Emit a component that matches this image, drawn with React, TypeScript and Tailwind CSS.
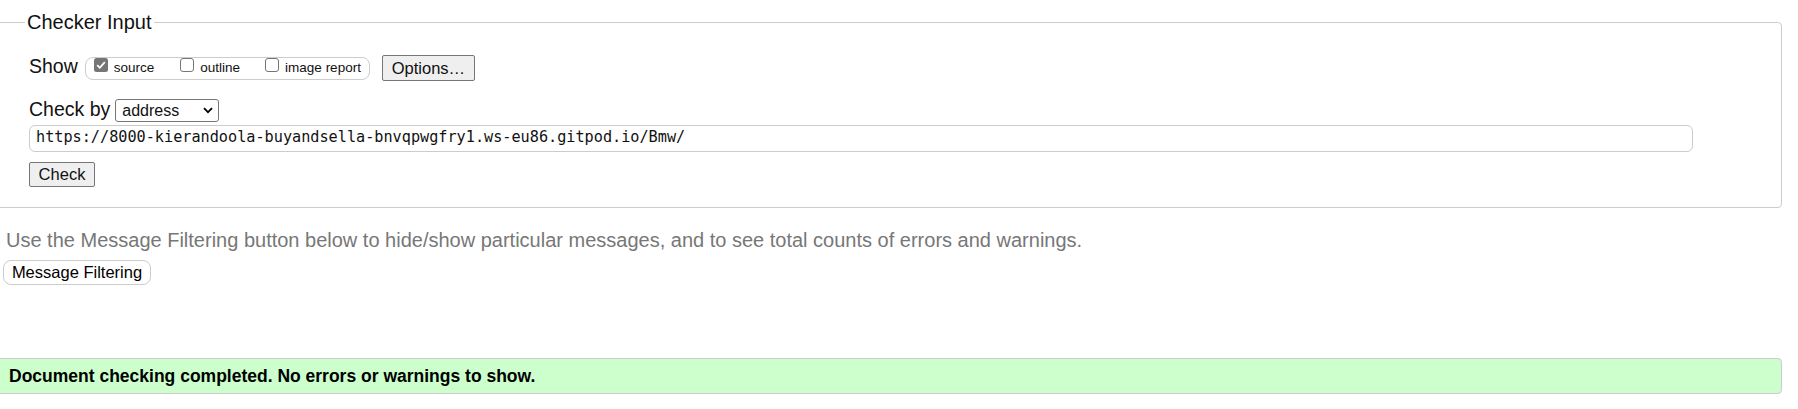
import React from "react";

const CHECK_URL =
  "https://8000-kierandoola-buyandsella-bnvqpwgfry1.ws-eu86.gitpod.io/Bmw/";

const Checkbox: React.FC<{ checked?: boolean }> = ({ checked }) => (
  <svg width="14" height="14" viewBox="0 0 14 14" className="shrink-0">
    {checked ? (
      <>
        <rect x="0" y="0" width="14" height="14" rx="2.5" fill="#767676" />
        <path
          d="M3.2 7.2 L5.8 9.8 L10.8 4.2"
          fill="none"
          stroke="#ffffff"
          strokeWidth="1.8"
        />
      </>
    ) : (
      <rect
        x="0.5"
        y="0.5"
        width="13"
        height="13"
        rx="2.5"
        fill="#ffffff"
        stroke="#767676"
      />
    )}
  </svg>
);

const App: React.FC = () => {
  return (
    <div className="min-h-[409px] bg-white text-[#111] font-['Liberation_Sans',Arial,sans-serif]">
      <fieldset className="mt-[11px] ml-[-10px] mr-[16px] rounded-[4px] border border-[#cccccc] pl-[38px] pb-[20px]">
        <legend className="ml-[-4px] px-[2px] text-[20px] leading-[23px]">
          Checker Input
        </legend>

        {/* Show row */}
        <div className="mt-[21px] flex h-[26px] items-start">
          <span className="text-[19.5px] leading-[22px]">Show</span>
          <div className="ml-[7px] mt-[2px] flex h-[23px] items-start rounded-[8px] border border-[#cccccc] px-[8px]">
            <Checkbox checked />
            <span className="ml-[6px] mt-[2px] text-[13.5px] leading-[16px]">
              source
            </span>
            <span className="ml-[26px]">
              <Checkbox />
            </span>
            <span className="ml-[6px] mt-[2px] text-[13.5px] leading-[16px]">
              outline
            </span>
            <span className="ml-[25px]">
              <Checkbox />
            </span>
            <span className="ml-[6px] mt-[2px] text-[13.5px] leading-[16px]">
              image report
            </span>
          </div>
          <div className="ml-[12px] flex h-[26px] w-[93px] items-center justify-center rounded-[2px] border border-[#767676] bg-[#efefef] text-[16.5px]">
            Options…
          </div>
        </div>

        {/* Check by row */}
        <div className="mt-[17px] flex items-start">
          <span className="text-[19.5px] leading-[22px]">Check by</span>
          <div className="ml-[5px] mt-[1px] flex h-[23px] w-[104px] items-center justify-between rounded-[3px] border border-[#767676] bg-white pl-[6px] pr-[5px]">
            <span className="text-[16px] leading-[18px]">address</span>
            <svg width="10" height="7" viewBox="0 0 10 7">
              <path
                d="M1 1.2 L5 5.2 L9 1.2"
                fill="none"
                stroke="#000"
                strokeWidth="1.8"
              />
            </svg>
          </div>
        </div>

        <div className="mt-[3px] flex h-[27px] w-[1664px] items-center rounded-[6px] border border-[#cccccc] pl-[6px] pb-[2px] font-['DejaVu_Sans_Mono',monospace] text-[15.2px]">
          {CHECK_URL}
        </div>

        <div className="mt-[10px] flex h-[25px] w-[66px] items-center justify-center rounded-[2px] border border-[#767676] bg-[#efefef] text-[16.5px]">
          Check
        </div>
      </fieldset>

      <p className="mt-[21px] ml-[6px] text-[20px] leading-[23px] text-[#777777]">
        Use the Message Filtering button below to hide/show particular messages,
        and to see total counts of errors and warnings.
      </p>

      <div className="mt-[8px] ml-[3px] flex h-[25px] w-[148px] items-center justify-center rounded-[8px] border border-[#cccccc] bg-white text-[16.5px] text-black">
        Message Filtering
      </div>

      <div className="mt-[73px] ml-[-10px] mr-[16px] flex h-[36px] items-center rounded-[4px] border border-[#cccccc] bg-[#ccffcc] pl-[18px] text-[17.5px] font-bold text-black">
        Document checking completed. No errors or warnings to show.
      </div>
    </div>
  );
};

export default App;
